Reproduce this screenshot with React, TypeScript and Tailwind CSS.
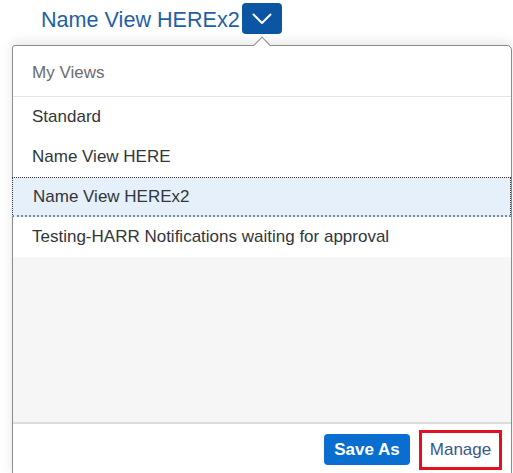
export default function App() {
  const items = [
    "Standard",
    "Name View HERE",
    "Name View HEREx2",
    "Testing-HARR Notifications waiting for approval",
  ];
  const selected = 2;

  return (
    <div className="w-[513px] h-[473px] bg-white overflow-hidden font-['Liberation_Sans',Arial,sans-serif]">
      {/* title + toggle */}
      <div className="flex items-start pl-[41px] pt-[3px] h-[42px]">
        <span className="text-[21.6px] leading-[31px] text-[#1f5fa8] pt-[1px]">Name View HEREx2</span>
        <button className="ml-[2px] w-[40px] h-[31px] rounded-[4px] bg-[#0b55a3] flex items-center justify-center">
          <svg width="20" height="12" viewBox="0 0 20 12" fill="none">
            <path d="M1.5 1.5 L10 10 L18.5 1.5" stroke="white" strokeWidth="2" strokeLinecap="round" strokeLinejoin="round" />
          </svg>
        </button>
      </div>

      {/* popover */}
      <div className="relative ml-[12px] mt-[3px] w-[500px] h-[432px] border border-[#8c8c8c] rounded-tr-[5px] rounded-tl-[3px] bg-white shadow-[0_-3px_12px_rgba(0,0,0,0.10)] flex flex-col">
        <div className="absolute -top-[7px] left-[243px] w-[12px] h-[12px] rotate-45 bg-white border-l border-t border-[#8c8c8c]" />

        <div className="h-[51px] shrink-0 flex items-center pl-[19px] pt-[3px] text-[17px] text-[#6a6d70] border-b border-[#e5e5e5]">
          My Views
        </div>

        <ul className="flex flex-col">
          {items.map((item, i) => (
            <li
              key={item}
              className={
                i === selected
                  ? "h-[40px] flex items-center text-[17px] text-[#32363a] bg-[#e5f0fa] border border-dotted border-[#333] border-b-[2px] border-b-[#6a8cb0] -ml-[1px] pl-[20px]"
                  : "h-[40px] flex items-center pl-[19px] text-[17px] text-[#32363a]"
              }
            >
              {item}
            </li>
          ))}
        </ul>

        <div className="flex-1 bg-[#f6f6f6] border-b-[2px] border-[#dcdcdc]" />

        <div className="h-[52px] shrink-0 flex items-start justify-end gap-[9px] pt-[9px] pr-[9px]">
          <button className="mt-[1px] w-[86px] h-[31px] rounded-[4px] bg-[#0a6ed1] text-white font-bold text-[17px]">
            Save As
          </button>
          <div className="w-[83px] h-[40px] -mt-[3px] border-[3px] border-[#e3101e] flex items-center justify-center text-[17px] text-[#35598a]">
            Manage
          </div>
        </div>
      </div>
    </div>
  );
}
